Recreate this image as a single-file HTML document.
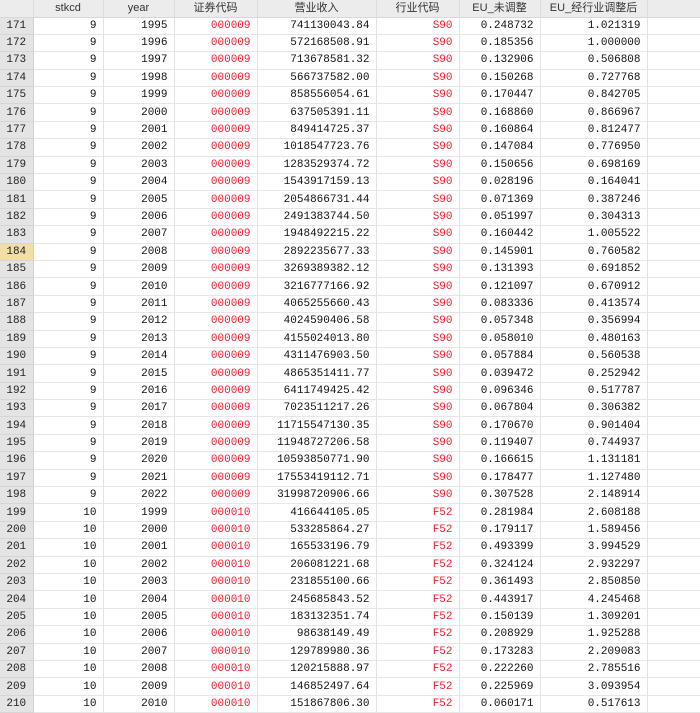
<!DOCTYPE html>
<html><head><meta charset="utf-8"><style>
body{margin:0;width:700px;height:700px;overflow:hidden;background:#fff;font-family:"Liberation Mono","DejaVu Sans Mono",monospace;font-size:11px;color:#111}
table{border-collapse:collapse;table-layout:fixed;position:absolute;left:0;top:0}
td,th{height:16.4px;padding:0 6px 0 0;border-right:1px solid #e2e2e2;border-bottom:1px solid #e6e6e6;text-align:right;white-space:nowrap;overflow:hidden;line-height:16px}
th{height:16.5px;background:#ececec;font-weight:normal;text-align:center;padding:0;color:#333;font-family:"Liberation Sans","Noto Sans CJK SC",sans-serif;font-size:11px;border-right:1px solid #dcdcdc;border-bottom:1px solid #d8d8d8}
td.h{background:#e4e4e4;text-align:center;padding:0;color:#222;border-right:1px solid #d0d0d0;border-bottom:1px solid #d6d6d6}
td.hl{background:#f3dea6}
td.r{color:#ee1c2e}
td.e{border-right:none}
</style></head><body>
<table>
<colgroup><col style="width:33px"><col style="width:70px"><col style="width:71px"><col style="width:83px"><col style="width:119px"><col style="width:83px"><col style="width:81px"><col style="width:107px"><col style="width:53px"></colgroup>
<tr><th></th><th>stkcd</th><th>year</th><th>证券代码</th><th>营业收入</th><th>行业代码</th><th>EU_未调整</th><th>EU_经行业调整后</th><th style="border-right:none"></th></tr>
<tr><td class="h">171</td><td>9</td><td>1995</td><td class="r">000009</td><td>741130043.84</td><td class="r">S90</td><td>0.248732</td><td>1.021319</td><td class="e"></td></tr>
<tr><td class="h">172</td><td>9</td><td>1996</td><td class="r">000009</td><td>572168508.91</td><td class="r">S90</td><td>0.185356</td><td>1.000000</td><td class="e"></td></tr>
<tr><td class="h">173</td><td>9</td><td>1997</td><td class="r">000009</td><td>713678581.32</td><td class="r">S90</td><td>0.132906</td><td>0.506808</td><td class="e"></td></tr>
<tr><td class="h">174</td><td>9</td><td>1998</td><td class="r">000009</td><td>566737582.00</td><td class="r">S90</td><td>0.150268</td><td>0.727768</td><td class="e"></td></tr>
<tr><td class="h">175</td><td>9</td><td>1999</td><td class="r">000009</td><td>858556054.61</td><td class="r">S90</td><td>0.170447</td><td>0.842705</td><td class="e"></td></tr>
<tr><td class="h">176</td><td>9</td><td>2000</td><td class="r">000009</td><td>637505391.11</td><td class="r">S90</td><td>0.168860</td><td>0.866967</td><td class="e"></td></tr>
<tr><td class="h">177</td><td>9</td><td>2001</td><td class="r">000009</td><td>849414725.37</td><td class="r">S90</td><td>0.160864</td><td>0.812477</td><td class="e"></td></tr>
<tr><td class="h">178</td><td>9</td><td>2002</td><td class="r">000009</td><td>1018547723.76</td><td class="r">S90</td><td>0.147084</td><td>0.776950</td><td class="e"></td></tr>
<tr><td class="h">179</td><td>9</td><td>2003</td><td class="r">000009</td><td>1283529374.72</td><td class="r">S90</td><td>0.150656</td><td>0.698169</td><td class="e"></td></tr>
<tr><td class="h">180</td><td>9</td><td>2004</td><td class="r">000009</td><td>1543917159.13</td><td class="r">S90</td><td>0.028196</td><td>0.164041</td><td class="e"></td></tr>
<tr><td class="h">181</td><td>9</td><td>2005</td><td class="r">000009</td><td>2054866731.44</td><td class="r">S90</td><td>0.071369</td><td>0.387246</td><td class="e"></td></tr>
<tr><td class="h">182</td><td>9</td><td>2006</td><td class="r">000009</td><td>2491383744.50</td><td class="r">S90</td><td>0.051997</td><td>0.304313</td><td class="e"></td></tr>
<tr><td class="h">183</td><td>9</td><td>2007</td><td class="r">000009</td><td>1948492215.22</td><td class="r">S90</td><td>0.160442</td><td>1.005522</td><td class="e"></td></tr>
<tr><td class="h hl">184</td><td>9</td><td>2008</td><td class="r">000009</td><td>2892235677.33</td><td class="r">S90</td><td>0.145901</td><td>0.760582</td><td class="e"></td></tr>
<tr><td class="h">185</td><td>9</td><td>2009</td><td class="r">000009</td><td>3269389382.12</td><td class="r">S90</td><td>0.131393</td><td>0.691852</td><td class="e"></td></tr>
<tr><td class="h">186</td><td>9</td><td>2010</td><td class="r">000009</td><td>3216777166.92</td><td class="r">S90</td><td>0.121097</td><td>0.670912</td><td class="e"></td></tr>
<tr><td class="h">187</td><td>9</td><td>2011</td><td class="r">000009</td><td>4065255660.43</td><td class="r">S90</td><td>0.083336</td><td>0.413574</td><td class="e"></td></tr>
<tr><td class="h">188</td><td>9</td><td>2012</td><td class="r">000009</td><td>4024590406.58</td><td class="r">S90</td><td>0.057348</td><td>0.356994</td><td class="e"></td></tr>
<tr><td class="h">189</td><td>9</td><td>2013</td><td class="r">000009</td><td>4155024013.80</td><td class="r">S90</td><td>0.058010</td><td>0.480163</td><td class="e"></td></tr>
<tr><td class="h">190</td><td>9</td><td>2014</td><td class="r">000009</td><td>4311476903.50</td><td class="r">S90</td><td>0.057884</td><td>0.560538</td><td class="e"></td></tr>
<tr><td class="h">191</td><td>9</td><td>2015</td><td class="r">000009</td><td>4865351411.77</td><td class="r">S90</td><td>0.039472</td><td>0.252942</td><td class="e"></td></tr>
<tr><td class="h">192</td><td>9</td><td>2016</td><td class="r">000009</td><td>6411749425.42</td><td class="r">S90</td><td>0.096346</td><td>0.517787</td><td class="e"></td></tr>
<tr><td class="h">193</td><td>9</td><td>2017</td><td class="r">000009</td><td>7023511217.26</td><td class="r">S90</td><td>0.067804</td><td>0.306382</td><td class="e"></td></tr>
<tr><td class="h">194</td><td>9</td><td>2018</td><td class="r">000009</td><td>11715547130.35</td><td class="r">S90</td><td>0.170670</td><td>0.901404</td><td class="e"></td></tr>
<tr><td class="h">195</td><td>9</td><td>2019</td><td class="r">000009</td><td>11948727206.58</td><td class="r">S90</td><td>0.119407</td><td>0.744937</td><td class="e"></td></tr>
<tr><td class="h">196</td><td>9</td><td>2020</td><td class="r">000009</td><td>10593850771.90</td><td class="r">S90</td><td>0.166615</td><td>1.131181</td><td class="e"></td></tr>
<tr><td class="h">197</td><td>9</td><td>2021</td><td class="r">000009</td><td>17553419112.71</td><td class="r">S90</td><td>0.178477</td><td>1.127480</td><td class="e"></td></tr>
<tr><td class="h">198</td><td>9</td><td>2022</td><td class="r">000009</td><td>31998720906.66</td><td class="r">S90</td><td>0.307528</td><td>2.148914</td><td class="e"></td></tr>
<tr><td class="h">199</td><td>10</td><td>1999</td><td class="r">000010</td><td>416644105.05</td><td class="r">F52</td><td>0.281984</td><td>2.608188</td><td class="e"></td></tr>
<tr><td class="h">200</td><td>10</td><td>2000</td><td class="r">000010</td><td>533285864.27</td><td class="r">F52</td><td>0.179117</td><td>1.589456</td><td class="e"></td></tr>
<tr><td class="h">201</td><td>10</td><td>2001</td><td class="r">000010</td><td>165533196.79</td><td class="r">F52</td><td>0.493399</td><td>3.994529</td><td class="e"></td></tr>
<tr><td class="h">202</td><td>10</td><td>2002</td><td class="r">000010</td><td>206081221.68</td><td class="r">F52</td><td>0.324124</td><td>2.932297</td><td class="e"></td></tr>
<tr><td class="h">203</td><td>10</td><td>2003</td><td class="r">000010</td><td>231855100.66</td><td class="r">F52</td><td>0.361493</td><td>2.850850</td><td class="e"></td></tr>
<tr><td class="h">204</td><td>10</td><td>2004</td><td class="r">000010</td><td>245685843.52</td><td class="r">F52</td><td>0.443917</td><td>4.245468</td><td class="e"></td></tr>
<tr><td class="h">205</td><td>10</td><td>2005</td><td class="r">000010</td><td>183132351.74</td><td class="r">F52</td><td>0.150139</td><td>1.309201</td><td class="e"></td></tr>
<tr><td class="h">206</td><td>10</td><td>2006</td><td class="r">000010</td><td>98638149.49</td><td class="r">F52</td><td>0.208929</td><td>1.925288</td><td class="e"></td></tr>
<tr><td class="h">207</td><td>10</td><td>2007</td><td class="r">000010</td><td>129789980.36</td><td class="r">F52</td><td>0.173283</td><td>2.209083</td><td class="e"></td></tr>
<tr><td class="h">208</td><td>10</td><td>2008</td><td class="r">000010</td><td>120215888.97</td><td class="r">F52</td><td>0.222260</td><td>2.785516</td><td class="e"></td></tr>
<tr><td class="h">209</td><td>10</td><td>2009</td><td class="r">000010</td><td>146852497.64</td><td class="r">F52</td><td>0.225969</td><td>3.093954</td><td class="e"></td></tr>
<tr><td class="h">210</td><td>10</td><td>2010</td><td class="r">000010</td><td>151867806.30</td><td class="r">F52</td><td>0.060171</td><td>0.517613</td><td class="e"></td></tr>
</table>
</body></html>
